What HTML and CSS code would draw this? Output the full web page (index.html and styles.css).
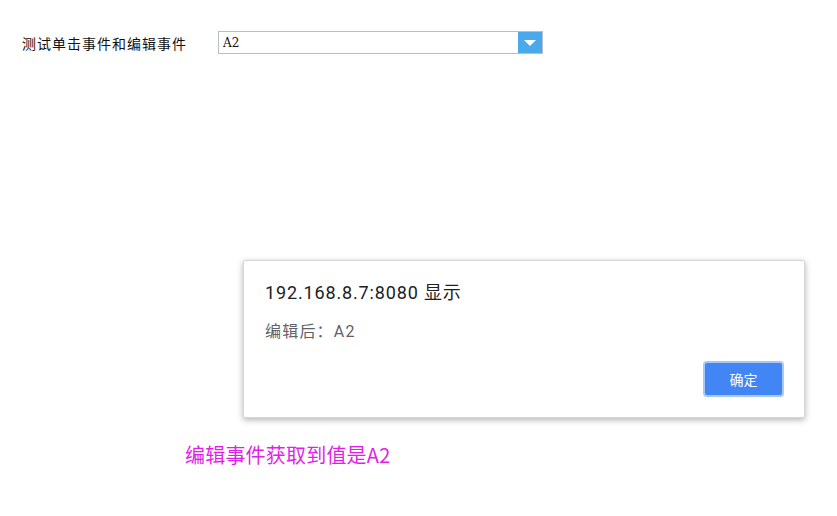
FILE: index.html
```html
<!DOCTYPE html>
<html lang="zh">
<head>
  <meta charset="UTF-8">
  <title>测试单击事件和编辑事件</title>
  <link rel="stylesheet" href="styles.css">
</head>
<body>
  <section class="form-row">
    <label class="form-label">测试单击事件和编辑事件</label>
    <div class="combo">
      <input class="combo-input" type="text" value="A2">
      <span class="combo-arrow"></span>
    </div>
  </section>

  <p class="result">编辑事件获取到值是A2</p>

  <div class="alert">
    <div class="alert-title">192.168.8.7:8080 显示</div>
    <div class="alert-msg">编辑后：A2</div>
    <div class="alert-actions">
      <button class="alert-btn">确定</button>
    </div>
  </div>
</body>
</html>
```

FILE: styles.css
```css
* {
    margin: 0;
    padding: 0;
    box-sizing: border-box;
}

body {
    background: #fff;
    color: #222;
    font-family: "Noto Sans CJK SC", sans-serif;
    position: relative;
    width: 837px;
    height: 516px;
    overflow: hidden;
}

.form-row {
    display: flex;
    align-items: center;
    padding: 31px 0 0 22px;
}

.form-label {
    width: 196px;
    font-size: 14px;
    letter-spacing: 1px;
    color: #111;
}

.combo {
    display: flex;
    width: 325px;
    height: 23px;
    border: 1px solid #b9bcc9;
    background: #fff;
}

.combo-input {
    flex: 1;
    border: none;
    outline: none;
    padding-left: 4px;
    font-family: "DejaVu Serif", "Liberation Serif", serif;
    font-size: 12px;
    color: #111;
}

.combo-arrow {
    width: 24px;
    background: #4aa8ec;
    display: flex;
    align-items: center;
    justify-content: center;
}

.combo-arrow::after {
    content: "";
    border-left: 6px solid transparent;
    border-right: 6px solid transparent;
    border-top: 6px solid #fff;
}

.result {
    margin: 386px 0 0 185px;
    font-family: "Noto Sans CJK SC", sans-serif;
    font-size: 20px;
    letter-spacing: 0.2px;
    color: #e21ee8;
}

.alert {
    position: absolute;
    left: 243px;
    top: 260px;
    width: 562px;
    height: 158px;
    background: #fff;
    border: 1px solid #d6d6d6;
    border-radius: 2px;
    box-shadow: 0 2px 6px rgba(0, 0, 0, 0.3);
    padding: 20px 20px 0 21px;
    font-family: Roboto, "Noto Sans CJK SC", sans-serif;
}

.alert-title {
    font-size: 18px;
    letter-spacing: 0.85px;
    color: #202124;
    line-height: 24px;
}

.alert-msg {
    margin-top: 16px;
    font-size: 16px;
    letter-spacing: 1.2px;
    color: #5f6368;
    line-height: 22px;
}

.alert-actions {
    display: flex;
    justify-content: flex-end;
    margin-top: 18px;
}

.alert-btn {
    width: 81px;
    height: 36px;
    background: #4285f4;
    color: #fff;
    border: 2px solid #a8c8fa;
    border-radius: 4px;
    font-family: "Noto Sans CJK SC", sans-serif;
    font-size: 14px;
}
```
